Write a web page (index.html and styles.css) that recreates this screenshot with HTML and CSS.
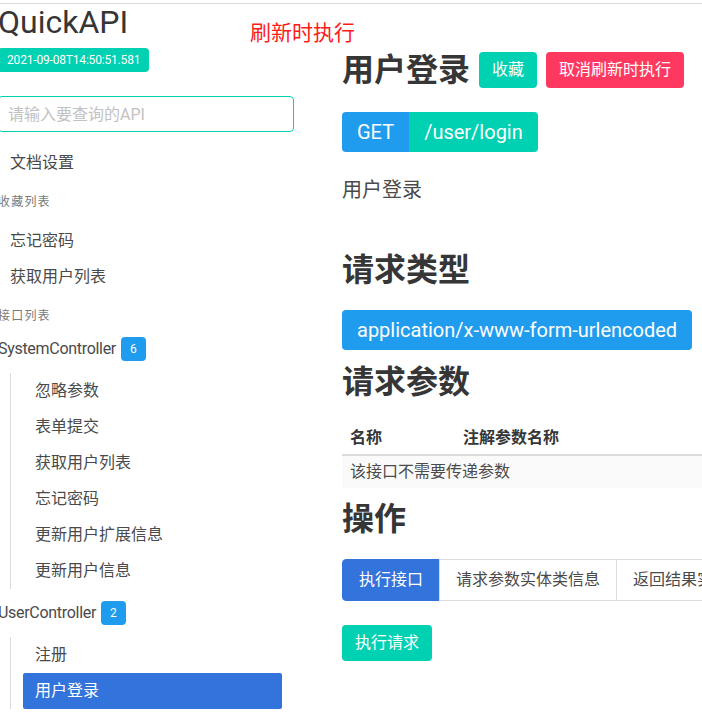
FILE: index.html
```html
<!DOCTYPE html>
<html lang="zh-CN">
<head>
<meta charset="utf-8">
<title>QuickAPI</title>
<link rel="stylesheet" href="styles.css">
</head>
<body>
<div class="topbar"></div>
<div class="refresh-note">刷新时执行</div>
<div class="layout">
  <aside class="sidebar">
    <h1 class="brand">QuickAPI</h1>
    <div class="stamp-wrap"><span class="tag tag-primary stamp">2021-09-08T14:50:51.581</span></div>
    <input class="search" type="text" placeholder="请输入要查询的API">
    <nav class="menu">
      <ul class="menu-list">
        <li><a>文档设置</a></li>
      </ul>
      <p class="menu-label">收藏列表</p>
      <ul class="menu-list">
        <li><a>忘记密码</a></li>
        <li><a>获取用户列表</a></li>
      </ul>
      <p class="menu-label">接口列表</p>
      <div class="controller"><span class="controller-name">SystemController</span><span class="tag tag-info">6</span></div>
      <ul class="menu-list sub">
        <li><a>忽略参数</a></li>
        <li><a>表单提交</a></li>
        <li><a>获取用户列表</a></li>
        <li><a>忘记密码</a></li>
        <li><a>更新用户扩展信息</a></li>
        <li><a>更新用户信息</a></li>
      </ul>
      <div class="controller"><span class="controller-name">UserController</span><span class="tag tag-info">2</span></div>
      <ul class="menu-list sub">
        <li><a>注册</a></li>
        <li><a class="active">用户登录</a></li>
      </ul>
    </nav>
  </aside>
  <main class="content">
    <div class="head-row">
      <h2 class="page-title">用户登录</h2>
      <button class="button button-primary">收藏</button>
      <button class="button button-danger">取消刷新时执行</button>
    </div>
    <div class="route">
      <span class="tag tag-lg tag-info route-method">GET</span>
      <span class="tag tag-lg tag-primary route-path">/user/login</span>
    </div>
    <p class="desc">用户登录</p>
    <h2 class="section-title">请求类型</h2>
    <div class="type-wrap"><span class="tag tag-lg tag-info">application/x-www-form-urlencoded</span></div>
    <h2 class="section-title">请求参数</h2>
    <table class="params">
      <thead>
        <tr><th class="col-name">名称</th><th>注解参数名称</th></tr>
      </thead>
      <tbody>
        <tr><td colspan="2">该接口不需要传递参数</td></tr>
      </tbody>
    </table>
    <h2 class="section-title">操作</h2>
    <ul class="tabs">
      <li><a class="active">执行接口</a></li>
      <li><a>请求参数实体类信息</a></li>
      <li><a>返回结果实体类信息</a></li>
    </ul>
    <button class="button button-primary">执行请求</button>
  </main>
</div>
</body>
</html>
```
FILE: styles.css
```css
html {
  overflow: hidden;
}

body {
  margin: 0;
  background: #fff;
  color: #4a4a4a;
  font-family: Roboto, "Noto Sans CJK SC", sans-serif;
  font-size: 16px;
  position: relative;
}

.topbar {
  height: 3px;
  border-bottom: 1px solid #dbdbdb;
}

.refresh-note {
  position: absolute;
  left: 250px;
  top: 21px;
  font-size: 21px;
  line-height: 24px;
  color: #ff1a1a;
}

.layout {
  display: flex;
  gap: 48px;
  margin-left: -2px;
}

/* ---------- sidebar ---------- */
.sidebar {
  flex: 0 0 296px;
  width: 296px;
}

.brand {
  margin: 0;
  font-size: 32px;
  line-height: 36px;
  font-weight: 400;
  color: #363636;
}

.stamp-wrap {
  margin-top: 8px;
  display: flex;
}

.tag {
  display: inline-flex;
  align-items: center;
  justify-content: center;
  height: 24px;
  padding: 0 9px;
  border-radius: 4px;
  font-size: 12px;
  line-height: 1.5;
  color: #fff;
  white-space: nowrap;
}

.stamp {
  letter-spacing: -0.18px;
}

.tag-primary { background: #00d1b2; }
.tag-info { background: #209cee; }

.search {
  display: block;
  box-sizing: border-box;
  width: 296px;
  height: 36px;
  margin-top: 24px;
  padding: 0 9px;
  border: 1px solid #00d1b2;
  border-radius: 4px;
  font: inherit;
  font-size: 16px;
  color: #363636;
  outline: none;
}

.search::placeholder {
  color: #c2c2c2;
}

.menu {
  margin-top: 13px;
}

.menu-list {
  list-style: none;
  margin: 0;
  padding: 0;
}

.menu-list a {
  display: block;
  padding: 8px 12px;
  line-height: 20px;
  border-radius: 2px;
  color: #4a4a4a;
}

.menu-list a.active {
  background: #3273dc;
  color: #fff;
}

.menu-list.sub {
  margin: 12px;
  padding-left: 12px;
  border-left: 1px solid #dbdbdb;
}

.menu-label {
  margin: 12px 0;
  font-size: 12px;
  line-height: 18px;
  letter-spacing: 0.1em;
  color: #7a7a7a;
}

.controller {
  display: flex;
  align-items: center;
  gap: 5px;
  height: 24px;
  line-height: 24px;
}

.controller-name {
  letter-spacing: -0.3px;
}

/* ---------- content ---------- */
.content {
  flex: 0 0 470px;
  width: 470px;
  padding-top: 48px;
}

.head-row {
  display: flex;
  align-items: center;
  gap: 9px;
  height: 36px;
}

.page-title,
.section-title {
  margin: 0;
  font-size: 32px;
  line-height: 36px;
  font-weight: 700;
  color: #363636;
}

.section-title {
  margin-bottom: 22px;
}

.button {
  display: inline-flex;
  align-items: center;
  justify-content: center;
  height: 36px;
  padding: 0 12px;
  border: 1px solid transparent;
  border-radius: 4px;
  font: inherit;
  font-size: 16px;
  line-height: 24px;
  color: #fff;
  cursor: pointer;
}

.button-primary { background: #00d1b2; }
.button-danger { background: #ff3860; }

.route {
  display: flex;
  margin-top: 24px;
}

.tag-lg {
  height: 40px;
  padding: 0 15px;
  font-size: 20px;
}

.route-method { border-radius: 4px 0 0 4px; }
.route-path { border-radius: 0 4px 4px 0; }

.desc {
  margin: 23px 0 47px;
  font-size: 20px;
  line-height: 30px;
}

.type-wrap {
  display: flex;
  margin-bottom: 14px;
}

.params {
  width: 100%;
  border-collapse: collapse;
  margin-bottom: 13px;
}

.params th {
  text-align: left;
  padding: 4px 8px;
  line-height: 24px;
  font-weight: 700;
  color: #363636;
  border-bottom: 2px solid #dbdbdb;
}

.params th.col-name {
  box-sizing: border-box;
  width: 113px;
}

.params td {
  padding: 4px 8px;
  line-height: 24px;
  background: #fafafa;
}

.tabs {
  display: flex;
  list-style: none;
  margin: 0 0 24px;
  padding: 0;
  white-space: nowrap;
}

.tabs li + li {
  margin-left: -1px;
}

.tabs a {
  display: block;
  padding: 8px 16px;
  line-height: 24px;
  border: 1px solid #dbdbdb;
  color: #4a4a4a;
}

.tabs li:first-child a {
  border-radius: 4px 0 0 4px;
}

.tabs a.active {
  background: #3273dc;
  border-color: #3273dc;
  color: #fff;
}
```
